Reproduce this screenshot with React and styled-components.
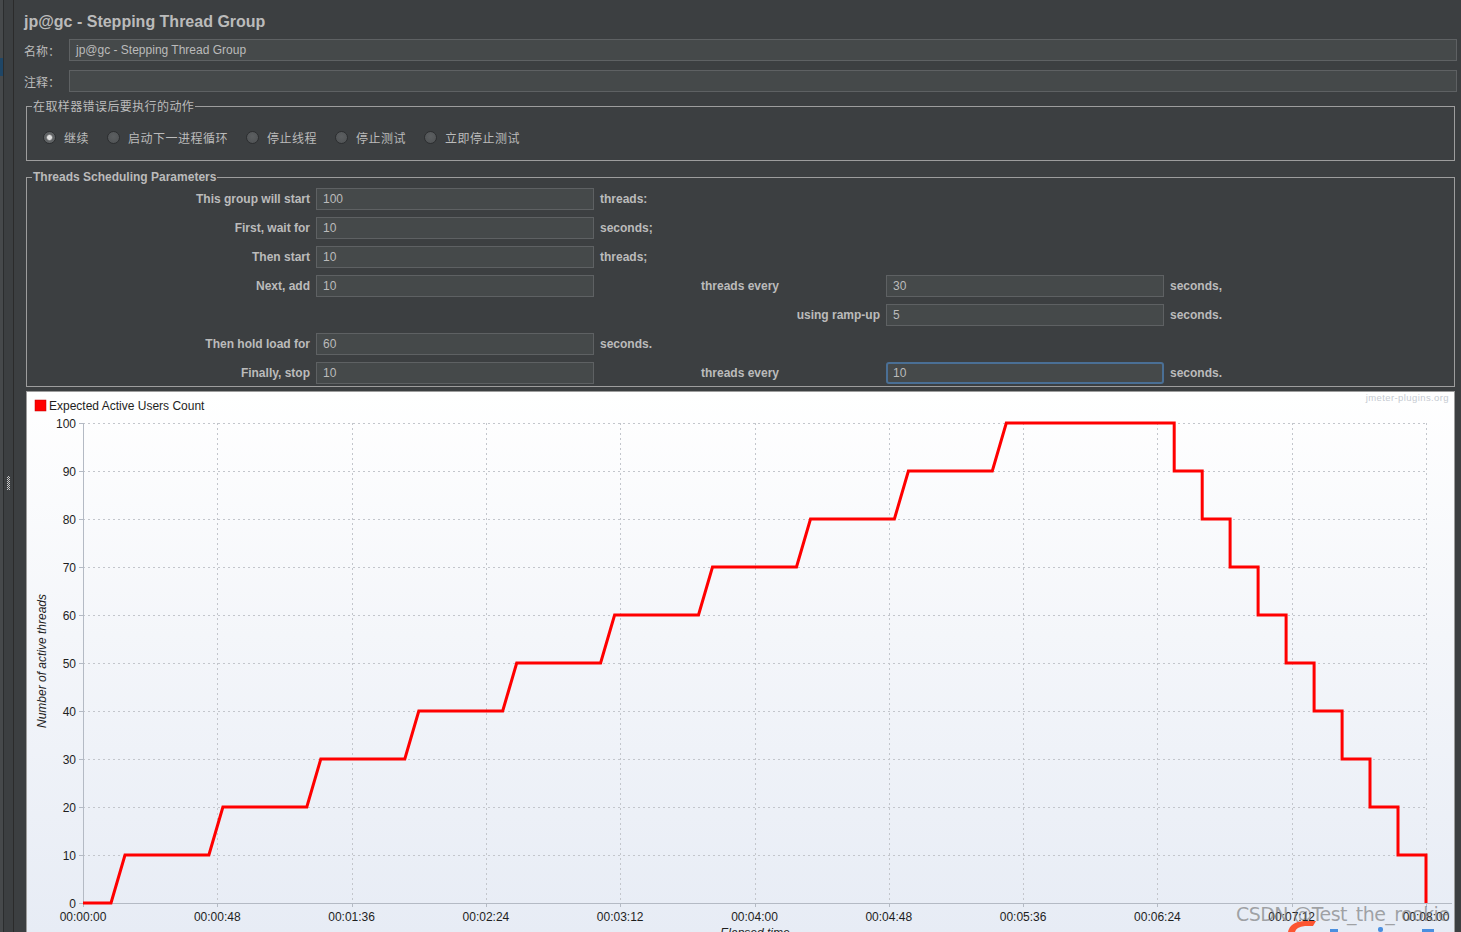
import React from 'react';
import styled, { createGlobalStyle } from 'styled-components';

const GlobalStyle = createGlobalStyle`
  html, body {
    margin: 0;
    padding: 0;
    background: #3c3f41;
  }
  * {
    box-sizing: border-box;
  }
`;

const UI_FONT = `"Liberation Sans", "Noto Sans CJK SC", Arial, sans-serif`;
const CJK_FONT = `"Noto Sans CJK SC", "Liberation Sans", sans-serif`;

const Page = styled.div`
  display: flex;
  width: 1461px;
  height: 932px;
  overflow: hidden;
  background: #3c3f41;
  color: #bbbbbb;
  font-family: ${UI_FONT};
  font-size: 12px;
`;

const TreeEdge = styled.div`
  width: 3px;
  background: #46494b;
  display: flex;
  flex-direction: column;
  padding-top: 58px;
`;

const TreeSelection = styled.div`
  height: 18px;
  background: #1f4666;
`;

const EdgeLine = styled.div`
  width: 1px;
  background: ${(p) => p.color || '#2b2d2e'};
`;

const Splitter = styled.div`
  width: 9px;
  display: flex;
  justify-content: center;
  padding-top: 476px;
`;

const Grip = styled.div`
  width: 3px;
  height: 14px;
  background: conic-gradient(#c8c8c8 25%, transparent 0 50%, #c8c8c8 0 75%, transparent 0) 0 0 / 2px 2px;
`;

const Main = styled.div`
  flex: 1;
  display: flex;
  flex-direction: column;
  padding: 11px 4px 0 8px;
  min-width: 0;
`;

const Title = styled.div`
  font-size: 16px;
  font-weight: bold;
  line-height: 21px;
  color: #bbbbbb;
`;

const FieldRow = styled.div`
  display: flex;
  align-items: center;
  height: 22px;
  margin-top: ${(p) => p.$top}px;
`;

const FieldLabel = styled.span`
  width: 45px;
  font-family: ${CJK_FONT};
  font-size: 12px;
`;

const TextBox = styled.div`
  flex: ${(p) => (p.$grow ? 1 : 'none')};
  height: 22px;
  display: flex;
  align-items: center;
  padding-left: ${(p) => (p.$focused ? 5 : 6)}px;
  background: #45494a;
  border: ${(p) => (p.$focused ? '2px solid #4a6f95' : '1px solid #5e6163')};
  border-radius: ${(p) => (p.$focused ? '3px' : '0')};
  color: #bbbbbb;
  font-size: 12px;
  white-space: nowrap;
`;

const Group = styled.fieldset`
  margin: ${(p) => p.$top}px 2px 0 2px;
  padding: ${(p) => p.$pad};
  border: 1px solid #9d9d9d;
  min-width: 0;
`;

const Legend = styled.legend`
  margin-left: 5px;
  padding: 0 1px;
  line-height: 16px;
  font-size: 12px;
  font-family: ${(p) => (p.$cjk ? CJK_FONT : UI_FONT)};
  font-weight: ${(p) => (p.$bold ? 'bold' : 'normal')};
  letter-spacing: ${(p) => (p.$cjk ? '0.4px' : '0')};
  color: #bbbbbb;
`;

const RadioRow = styled.div`
  display: flex;
  align-items: center;
  gap: 18px;
  height: 14px;
  padding-left: 16px;
`;

const RadioItem = styled.label`
  display: flex;
  align-items: center;
  gap: 8px;
  font-family: ${CJK_FONT};
  font-size: 12px;
  letter-spacing: 0.5px;
  color: #bbbbbb;
`;

const RadioDot = styled.span`
  flex: none;
  display: block;
  width: 13px;
  height: 13px;
  border-radius: 50%;
  border: 1px solid #2c2e30;
  background: ${(p) =>
    p.$checked
      ? 'radial-gradient(circle, #e0e0e0 0 2px, #a0a0a0 2.6px, #606365 3.4px)'
      : 'radial-gradient(circle at 50% 40%, #5c5f61, #4e5153)'};
`;

const ParamGrid = styled.div`
  display: grid;
  grid-template-columns: 283px 278px 95px 179px 278px 1fr;
  grid-auto-rows: 22px;
  column-gap: 6px;
  row-gap: 7px;
  align-items: center;
`;

const ParamLabel = styled.span`
  font-weight: bold;
  font-size: 12px;
  color: #bbbbbb;
  white-space: nowrap;
  text-align: ${(p) => p.$align || 'right'};
`;

const ChartPanel = styled.div`
  margin: 4px 2px 0 2px;
  flex: 1;
  border: 1px solid #9d9d9d;
  border-bottom: none;
  background: linear-gradient(#ffffff 0%, #f4f6fa 45%, #e7ecf5 100%);
  overflow: hidden;
`;

const actions = ['继续', '启动下一进程循环', '停止线程', '停止测试', '立即停止测试'];

const params = [
  ['This group will start', '100', 'threads:'],
  ['First, wait for', '10', 'seconds;'],
  ['Then start', '10', 'threads;'],
  ['Next, add', '10', null, 'threads every', '30', 'seconds,'],
  [null, null, null, 'using ramp-up', '5', 'seconds.'],
  ['Then hold load for', '60', 'seconds.'],
  ['Finally, stop', '10', null, 'threads every', '10', 'seconds.', true],
];

// chart geometry, in page pixels
const X0 = 83;
const PX_PER_SEC = 1343 / 480;
const Y0 = 903;
const PX_PER_USER = 4.8;
const X = (t) => X0 + t * PX_PER_SEC;
const Y = (v) => Y0 - v * PX_PER_USER;

const buildSeries = () => {
  const pts = [[0, 0], [10, 0]];
  let t = 10;
  for (let v = 10; v <= 100; v += 10) {
    pts.push([t + 5, v]);
    t += 5;
    if (v < 100) {
      pts.push([t + 30, v]);
      t += 30;
    }
  }
  pts.push([390, 100]);
  for (let v = 90, s = 390; v >= 0; v -= 10, s += 10) {
    pts.push([s, v + 10]);
    pts.push([s, v]);
    pts.push([s + 10, v]);
  }
  pts.pop();
  pts.push([480, 10]);
  pts.push([480, 0]);
  return pts.map(([tt, v]) => `${X(tt).toFixed(1)},${Y(v).toFixed(1)}`).join(' ');
};

const fmt = (sec) => {
  const h = String(Math.floor(sec / 3600)).padStart(2, '0');
  const m = String(Math.floor((sec % 3600) / 60)).padStart(2, '0');
  const s = String(sec % 60).padStart(2, '0');
  return `${h}:${m}:${s}`;
};

const Chart = () => {
  const yTicks = Array.from({ length: 11 }, (_, i) => i * 10);
  const xTicks = Array.from({ length: 11 }, (_, i) => i * 48);
  const fontFamily = '"Liberation Sans", Arial, sans-serif';
  return (
    <svg width="1428" height="540" viewBox="27 392 1428 540" style={{ display: 'block' }}>
      <rect x="35" y="400" width="11" height="11" fill="#ff0000" stroke="#c00000" strokeWidth="0.5" />
      <text x="49" y="409.5" fontSize="12" fontFamily={fontFamily} fill="#1e1e1e">
        Expected Active Users Count
      </text>
      <text x="1449" y="401" fontSize="9.5" fontFamily={fontFamily} fill="#c6cbd2" textAnchor="end" letterSpacing="0.4">
        jmeter-plugins.org
      </text>

      {yTicks.slice(1).map((v) => (
        <line key={`gy${v}`} x1={X0} x2={X(480)} y1={Y(v) + 0.5} y2={Y(v) + 0.5} stroke="#c3c6cc" strokeDasharray="2 3" />
      ))}
      {xTicks.slice(1).map((t) => (
        <line key={`gx${t}`} x1={Math.round(X(t)) + 0.5} x2={Math.round(X(t)) + 0.5} y1={Y(100)} y2={Y0} stroke="#c3c6cc" strokeDasharray="2 3" />
      ))}

      <line x1={X0 + 0.5} x2={X0 + 0.5} y1={Y(100)} y2={Y0} stroke="#b4bac4" />
      <line x1={X0} x2="1452" y1={Y0 + 0.5} y2={Y0 + 0.5} stroke="#b4bac4" />
      {yTicks.map((v) => (
        <line key={`ty${v}`} x1={X0 - 4} x2={X0} y1={Y(v) + 0.5} y2={Y(v) + 0.5} stroke="#b4bac4" />
      ))}
      {xTicks.map((t) => (
        <line key={`tx${t}`} x1={Math.round(X(t)) + 0.5} x2={Math.round(X(t)) + 0.5} y1={Y0} y2={Y0 + 4} stroke="#b4bac4" />
      ))}

      {yTicks.map((v) => (
        <text key={`ly${v}`} x="76" y={Y(v) + 4.5} fontSize="12" fontFamily={fontFamily} fill="#1e1e1e" textAnchor="end">
          {v}
        </text>
      ))}
      {xTicks.map((t) => (
        <text key={`lx${t}`} x={X(t)} y="920.5" fontSize="12" fontFamily={fontFamily} fill="#1e1e1e" textAnchor="middle">
          {fmt(t)}
        </text>
      ))}

      <text
        x="46"
        y="661"
        transform="rotate(-90 46 661)"
        fontSize="12"
        fontStyle="italic"
        fontFamily={fontFamily}
        fill="#1e1e1e"
        textAnchor="middle"
      >
        Number of active threads
      </text>
      <text x="755" y="937" fontSize="12" fontStyle="italic" fontFamily={fontFamily} fill="#1e1e1e" textAnchor="middle">
        Elapsed time
      </text>

      <polyline points={buildSeries()} fill="none" stroke="#ff0000" strokeWidth="3" strokeLinejoin="miter" />

      <text x="1236" y="921" fontSize="19" fontFamily='"DejaVu Sans", sans-serif' fill="rgba(110,110,110,0.6)" textLength="214">
        CSDN @Test_the_rookie
      </text>
      <path d="M1288 932 Q1290 922 1304 921 L1316 921 L1313 926 L1305 926 Q1296 927 1295 932 Z" fill="#fc5531" />
      <rect x="1330" y="929" width="8" height="3" fill="#4a8fe0" />
      <rect x="1378" y="927" width="5" height="5" rx="2" fill="#4a8fe0" />
      <rect x="1422" y="929" width="12" height="3" fill="#4a8fe0" />
    </svg>
  );
};

const App = () => {
  return (
    <>
      <GlobalStyle />
      <Page>
        <TreeEdge>
          <TreeSelection />
        </TreeEdge>
        <EdgeLine />
        <Splitter>
          <Grip />
        </Splitter>
        <EdgeLine color="#2b2b2b" />
        <EdgeLine color="#3c3f41" />
        <EdgeLine color="#3c3f41" />
        <Main>
          <Title>jp@gc - Stepping Thread Group</Title>
          <FieldRow $top={7}>
            <FieldLabel>名称：</FieldLabel>
            <TextBox $grow>jp@gc - Stepping Thread Group</TextBox>
          </FieldRow>
          <FieldRow $top={9}>
            <FieldLabel>注释：</FieldLabel>
            <TextBox $grow />
          </FieldRow>

          <Group $top={6} $pad="16px 0 16px 0">
            <Legend $cjk>在取样器错误后要执行的动作</Legend>
            <RadioRow>
              {actions.map((a, i) => (
                <RadioItem key={a}>
                  <RadioDot $checked={i === 0} />
                  {a}
                </RadioItem>
              ))}
            </RadioRow>
          </Group>

          <Group $top={8} $pad="3px 0 2px 0">
            <Legend $bold>Threads Scheduling Parameters</Legend>
            <ParamGrid>
              {params.map((row, r) => {
                const [label, value, unit, label2, value2, unit2, focused] = row;
                return (
                  <React.Fragment key={r}>
                    {label ? <ParamLabel>{label}</ParamLabel> : <span />}
                    {value ? <TextBox>{value}</TextBox> : <span />}
                    {unit ? <ParamLabel $align="left">{unit}</ParamLabel> : <span />}
                    {label2 ? (
                      <ParamLabel $align={label2 === 'using ramp-up' ? 'right' : 'left'}>{label2}</ParamLabel>
                    ) : (
                      <span />
                    )}
                    {value2 ? <TextBox $focused={focused}>{value2}</TextBox> : <span />}
                    {unit2 ? <ParamLabel $align="left">{unit2}</ParamLabel> : <span />}
                  </React.Fragment>
                );
              })}
            </ParamGrid>
          </Group>

          <ChartPanel>
            <Chart />
          </ChartPanel>
        </Main>
      </Page>
    </>
  );
};

export default App;
